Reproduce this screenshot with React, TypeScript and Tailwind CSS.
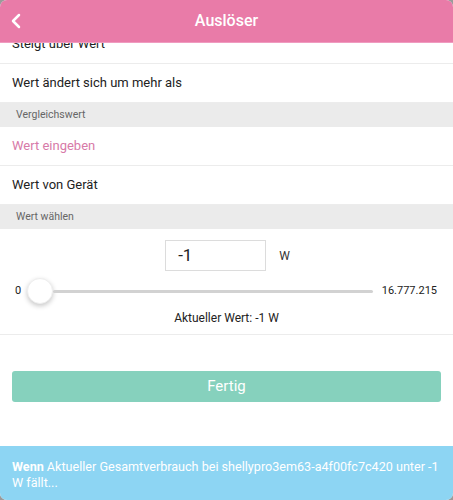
import { ChevronLeft } from 'lucide-react';

const font = { fontFamily: 'Roboto, "Liberation Sans", Arial, sans-serif' };

function Row({ label, pink = false }: { label: string; pink?: boolean }) {
  return (
    <div className="h-[39px] flex items-center px-3 border-b border-[#ececec] bg-white">
      <span className={`text-[13px] ${pink ? 'text-[#d77aa8]' : 'text-[#222]'}`}>{label}</span>
    </div>
  );
}

function Section({ label }: { label: string }) {
  return (
    <div className="h-[24px] flex items-center px-4 bg-[#ebebeb]">
      <span className="text-[10.5px] text-[#666]">{label}</span>
    </div>
  );
}

export default function App() {
  return (
    <div className="w-[453px] h-[500px] bg-[#9a9a9a]" style={font}>
      <div className="w-full h-full rounded-[7px] overflow-hidden bg-white flex flex-col relative">
        <div className="absolute top-0 left-0 right-0 h-[43px] bg-[#e97ba8] border-b border-[#f09bc0] flex items-center justify-center z-10">
          <ChevronLeft className="absolute left-[4px] top-[9px] text-white" size={24} strokeWidth={2.5} />
          <span className="text-white text-[16px] font-medium">Auslöser</span>
        </div>

        <div className="mt-[25px]">
          <Row label="Steigt über Wert" />
          <Row label="Wert ändert sich um mehr als" />
          <Section label="Vergleichswert" />
          <Row label="Wert eingeben" pink />
          <Row label="Wert von Gerät" />
          <Section label="Wert wählen" />
        </div>

        <div className="bg-white border-b border-[#ececec] pt-[11px] pb-[7px]">
          <div className="flex items-center justify-center pl-[2px]">
            <div className="w-[101px] h-[31px] border border-[#dcdcdc] flex items-center px-3">
              <span className="text-[17px] text-[#222]">-1</span>
            </div>
            <span className="ml-[13px] text-[12px] text-[#333]">W</span>
          </div>
          <div className="flex items-center pl-[15px] pr-[16px] mt-[4px] h-[32px]">
            <span className="text-[11px] text-[#222] w-[12px]">0</span>
            <div className="flex-1 flex items-center relative">
              <div className="w-[26px] h-[26px] rounded-full bg-white shadow-[0_2px_5px_rgba(0,0,0,0.22)] border border-[#eee] shrink-0" />
              <div className="flex-1 h-[3px] bg-[#d2d2d2] rounded-full" />
            </div>
            <span className="text-[11px] text-[#222] ml-[9px]">16.777.215</span>
          </div>
          <div className="text-center text-[12px] text-[#222] mt-[2px]">Aktueller Wert: -1 W</div>
        </div>

        <div className="px-3 pt-[36px]">
          <button className="w-full h-[31px] rounded-[3px] bg-[#86d1bd] text-white text-[15px]">Fertig</button>
        </div>

        <div className="mt-auto bg-[#8dd5f3] h-[54px] px-3 pt-[13px] text-white text-[12.6px] leading-[16px]">
          <span className="font-bold">Wenn</span> Aktueller Gesamtverbrauch bei shellypro3em63-a4f00fc7c420 unter -1 W fällt...
        </div>
      </div>
    </div>
  );
}
